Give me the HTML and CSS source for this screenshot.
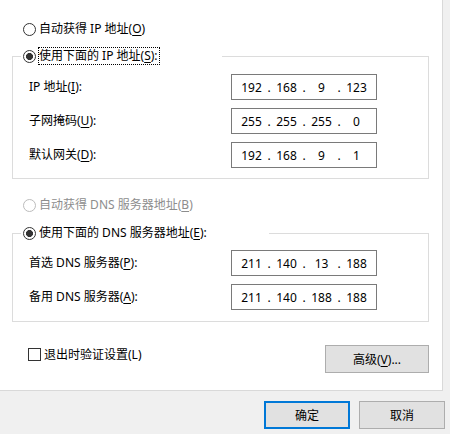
FILE: index.html
```html
<!DOCTYPE html>
<html lang="zh-CN">
<head>
<meta charset="utf-8">
<title>IPv4 属性</title>
<link rel="stylesheet" href="styles.css">
</head>
<body>
<div class="panel">
  <div class="radio-row row-ip-auto">
    <span class="radio"></span><span class="rlabel">自动获得 IP 地址(<u>O</u>)</span>
  </div>
  <div class="group group-ip">
    <div class="legend legend-ip">
      <span class="radio checked"></span><span class="rlabel focus">使用下面的 IP 地址(<u>S</u>):</span>
    </div>
    <div class="fields fields-ip">
      <span class="flabel">IP 地址(<u>I</u>):</span>
      <div class="ipbox"><span class="oct">192</span><span class="dot">.</span><span class="oct">168</span><span class="dot">.</span><span class="oct">9</span><span class="dot">.</span><span class="oct">123</span></div>
      <span class="flabel">子网掩码(<u>U</u>):</span>
      <div class="ipbox"><span class="oct">255</span><span class="dot">.</span><span class="oct">255</span><span class="dot">.</span><span class="oct">255</span><span class="dot">.</span><span class="oct">0</span></div>
      <span class="flabel">默认网关(<u>D</u>):</span>
      <div class="ipbox"><span class="oct">192</span><span class="dot">.</span><span class="oct">168</span><span class="dot">.</span><span class="oct">9</span><span class="dot">.</span><span class="oct">1</span></div>
    </div>
  </div>
  <div class="radio-row row-dns-auto">
    <span class="radio disabled"></span><span class="rlabel disabled-text">自动获得 DNS 服务器地址(<u>B</u>)</span>
  </div>
  <div class="group group-dns">
    <div class="legend legend-dns">
      <span class="radio checked"></span><span class="rlabel">使用下面的 DNS 服务器地址(<u>E</u>):</span>
    </div>
    <div class="fields fields-dns">
      <span class="flabel">首选 DNS 服务器(<u>P</u>):</span>
      <div class="ipbox"><span class="oct">211</span><span class="dot">.</span><span class="oct">140</span><span class="dot">.</span><span class="oct">13</span><span class="dot">.</span><span class="oct">188</span></div>
      <span class="flabel">备用 DNS 服务器(<u>A</u>):</span>
      <div class="ipbox"><span class="oct">211</span><span class="dot">.</span><span class="oct">140</span><span class="dot">.</span><span class="oct">188</span><span class="dot">.</span><span class="oct">188</span></div>
    </div>
  </div>
  <div class="bottom-row">
    <div class="check-row">
      <span class="check"></span><span class="clabel">退出时验证设置(L)</span>
    </div>
    <div class="btn btn-adv">高级(<u>V</u>)...</div>
  </div>
</div>
<div class="footer">
  <div class="btn btn-dlg btn-default">确定</div>
  <div class="btn btn-dlg">取消</div>
</div>
</body>
</html>
```
FILE: styles.css
```css
* {
  box-sizing: border-box;
}

body {
  margin: 0;
  width: 450px;
  height: 434px;
  overflow: hidden;
  background: #f0f0f0;
  font-family: "Noto Sans", "Noto Sans CJK SC", sans-serif;
  font-size: 12px;
  color: #000;
}

u {
  text-decoration-thickness: 1px;
  text-underline-offset: 2px;
}

.panel {
  width: 443px;
  background: #fff;
  border-right: 1px solid #d9d9d9;
  border-bottom: 1px solid #d9d9d9;
  padding-top: 20px;
  padding-bottom: 17px;
}

.radio-row {
  display: flex;
  align-items: center;
  height: 18px;
  padding-left: 23px;
}

.row-ip-auto {
  margin-bottom: 18px;
}

.row-dns-auto {
  margin-top: 17px;
  margin-bottom: 19px;
}

.radio {
  flex: none;
  width: 13px;
  height: 13px;
  border: 1px solid #333;
  border-radius: 50%;
  background: #fff;
}

.radio.checked {
  background: radial-gradient(circle at center, #333 0 3.2px, #fff 3.8px);
}

.radio.disabled {
  border-color: #bcbcbc;
}

.rlabel {
  margin-left: 2px;
  border: 1px solid transparent;
  line-height: 16px;
  padding-right: 1px;
  white-space: nowrap;
}

.rlabel.focus {
  border: 1px dotted #000;
}

.disabled-text {
  color: #8d8d8d;
}

.group {
  margin-left: 12px;
  width: 417px;
  border: 1px solid #dcdcdc;
  padding: 0 0 10px 16px;
}

.group-dns {
  padding-bottom: 11px;
}

.legend {
  display: flex;
  align-items: center;
  height: 18px;
  margin-top: -10px;
  margin-left: -8px;
  padding-left: 2px;
  background: #fff;
}

.legend-ip {
  width: 201px;
}

.legend-dns {
  width: 248px;
}

.fields {
  display: grid;
  grid-template-columns: 202px 146px;
  row-gap: 8px;
  align-items: center;
}

.fields-ip {
  margin-top: 9px;
}

.fields-dns {
  margin-top: 8px;
}

.flabel {
  white-space: nowrap;
  line-height: 18px;
}

.ipbox {
  display: flex;
  align-items: center;
  height: 26px;
  border: 1px solid #7a7a7a;
  padding-left: 6px;
  background: #fff;
}

.oct {
  width: 27px;
  text-align: center;
}

.dot {
  width: 8px;
  text-align: center;
}

.bottom-row {
  display: flex;
  justify-content: space-between;
  align-items: flex-start;
  margin: 23px 13px 0 28px;
}

.check-row {
  display: flex;
  align-items: center;
  height: 18px;
}

.check {
  flex: none;
  width: 13px;
  height: 13px;
  border: 1px solid #333;
  background: #fff;
}

.clabel {
  margin-left: 3px;
  white-space: nowrap;
}

.btn {
  display: flex;
  align-items: center;
  justify-content: center;
  height: 28px;
  background: #e1e1e1;
  border: 1px solid #adadad;
  white-space: nowrap;
}

.btn-adv {
  width: 104px;
}

.footer {
  display: flex;
  justify-content: flex-end;
  gap: 9px;
  padding: 10px 5px 0 0;
}

.btn-dlg {
  width: 86px;
}

.btn-default {
  border: 2px solid #0078d7;
}
```
